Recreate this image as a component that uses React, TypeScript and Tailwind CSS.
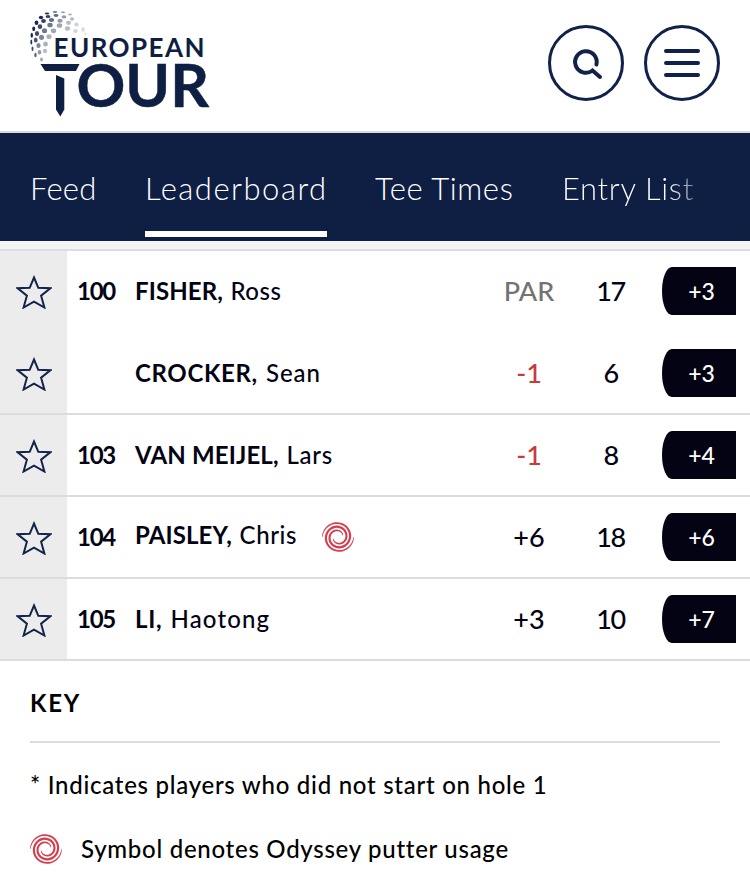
const tabs = [
  { label: "Feed", active: false, className: "mr-[49px] w-[66px] tracking-[0.2px]" },
  { label: "Leaderboard", active: true, className: "mr-[48px] w-[182px] tracking-[1.5px]" },
  { label: "Tee Times", active: false, className: "mr-[49px] w-[138px] tracking-[0.6px]" },
  { label: "Entry List", active: false, className: "w-[134px] tracking-[0.65px]" },
];

type Player = {
  pos: string;
  last: string;
  first: string;
  today: string;
  hole: string;
  total: string;
  lastTracking: string;
  firstTracking: string;
  odyssey?: boolean;
  tied?: boolean;
};

const players: Player[] = [
  { pos: "100", last: "FISHER,", first: "Ross", today: "PAR", hole: "17", total: "+3", lastTracking: "tracking-[0.1px]", firstTracking: "tracking-[0.5px]", tied: true },
  { pos: "", last: "CROCKER,", first: "Sean", today: "-1", hole: "6", total: "+3", lastTracking: "tracking-[0.65px]", firstTracking: "tracking-[1px]" },
  { pos: "103", last: "VAN MEIJEL,", first: "Lars", today: "-1", hole: "8", total: "+4", lastTracking: "tracking-[0.15px]", firstTracking: "tracking-[0.7px]" },
  { pos: "104", last: "PAISLEY,", first: "Chris", today: "+6", hole: "18", total: "+6", lastTracking: "tracking-[0.1px]", firstTracking: "tracking-[0.6px]", odyssey: true },
  { pos: "105", last: "LI,", first: "Haotong", today: "+3", hole: "10", total: "+7", lastTracking: "tracking-[0.7px]", firstTracking: "tracking-[1.15px]" },
];

// cx, cy, rx, ry, opacity
const dimples = [
  [47, 13.5, 2.3, 0.9, 0.9], [55, 12, 2.4, 0.8, 0.8], [63, 12.3, 2.2, 0.8, 0.5], [70, 14.5, 2, 1, 0.35],
  [41, 17.5, 2.2, 1.7, 0.95], [48, 16.5, 2.4, 1.5, 0.85], [56, 15.5, 2.5, 1.4, 0.65], [64, 16.8, 2.4, 1.6, 0.45], [72, 19, 2.2, 1.8, 0.3],
  [36.5, 22.8, 1.9, 2.2, 0.95], [43.5, 21, 2.4, 2, 0.85], [51.5, 20, 2.7, 2, 0.65], [60, 20.8, 2.7, 2, 0.45], [68.5, 22.8, 2.5, 2.1, 0.3], [76.5, 24.5, 2.2, 2, 0.2],
  [33.7, 28.8, 1.5, 2.4, 0.95], [40, 26.7, 2.3, 2.4, 0.8], [50, 25, 2.7, 2.3, 0.6], [59.5, 25.5, 2.7, 2.3, 0.4], [67.5, 28.5, 2.6, 2.3, 0.3], [75.5, 31, 2.4, 2.1, 0.18], [83, 29.5, 1.8, 2.2, 0.16],
  [31.8, 35.2, 1.2, 2.5, 0.95], [37, 33.5, 2.1, 2.6, 0.8], [44.5, 30.8, 2.6, 2.5, 0.6], [53.5, 30.8, 2.7, 2.4, 0.4], [85.5, 34, 1, 1.3, 0.14],
  [31.3, 42, 1, 2.5, 0.9], [35.7, 40, 1.9, 2.6, 0.75], [41.5, 37.3, 2.5, 2.6, 0.55], [49, 36.7, 2.6, 2.4, 0.35],
  [32.5, 48.8, 1, 2.4, 0.8], [38.5, 45.5, 2.1, 2.5, 0.55], [45.5, 44, 2.4, 2.5, 0.35],
  [35.5, 55, 1.2, 2.2, 0.7], [39.5, 52.3, 1.8, 2.3, 0.45], [45, 51, 2.1, 2.2, 0.3], [41.5, 59.5, 1.4, 1.9, 0.4],
];

function Logo() {
  return (
    <svg width="184" height="110" viewBox="28 9 184 110" fill="#0f1f43">
      {dimples.map(([cx, cy, rx, ry, opacity], i) => (
        <ellipse key={i} cx={cx} cy={cy} rx={rx} ry={ry} opacity={opacity} />
      ))}
      <text x="53.5" y="57" fontSize="26" fontWeight="700" fontFamily="Lato, sans-serif" textLength="151">
        EUROPEAN
      </text>
      <path d="M40.5 64h39l-3.5 7H45z" />
      <path d="M56 75l8.300 3.500v31l-4 7-4.300-7z" />
      <text x="76.5" y="107" fontSize="60" fontWeight="700" fontFamily="Lato, sans-serif" textLength="132.5" lengthAdjust="spacingAndGlyphs" stroke="#0f1f43" strokeWidth="0.5">
        OUR
      </text>
    </svg>
  );
}

function Star() {
  return (
    <svg width="36" height="34" viewBox="0 0 36 34" fill="none" stroke="#12244a" strokeWidth="2">
      <path d="M18 2.500l4.300 10.300 12 .5-9.200 7.400 3.300 11.800L18 26.700 7.600 32.500l3.300-11.800-9.200-7.400 12-.5z" />
    </svg>
  );
}

// One arm of the swirl: a spiral band that thins out at both ends
function spiralArm(start: number) {
  const steps = 60;
  const turns = 1.45;
  const outer: string[] = [];
  const inner: string[] = [];
  for (let i = 0; i <= steps; i++) {
    const t = i / steps;
    const angle = start + t * turns * 2 * Math.PI;
    const r = 15.7 - 7.3 * turns * t;
    const half = 0.2 + 0.95 * Math.sqrt(Math.max(0, Math.sin(Math.PI * t)));
    outer.push(`${((r + half) * Math.cos(angle)).toFixed(2)} ${((r + half) * Math.sin(angle)).toFixed(2)}`);
    inner.unshift(`${((r - half) * Math.cos(angle)).toFixed(2)} ${((r - half) * Math.sin(angle)).toFixed(2)}`);
  }
  return `M${[...outer, ...inner].join("L")}Z`;
}

const swirlPath = spiralArm(Math.PI) + spiralArm(0);

function Swirl() {
  return (
    <svg className="shrink-0" width="32" height="32" viewBox="-16 -16 32 32" fill="#d24050">
      <path d={swirlPath} />
    </svg>
  );
}

function todayColor(today: string) {
  if (today === "PAR") return "text-[#737373]";
  return today.startsWith("-") ? "text-[#c43c3c]" : "text-[#030314]";
}

function PlayerRow({ player }: { player: Player }) {
  return (
    <div className={`flex h-[82px] border-b-2 ${player.tied ? "border-transparent" : "border-[#dcdcde]"}`}>
      <div className={`flex w-[67px] shrink-0 items-center justify-center bg-[#ececec] pt-0.5 ${player.tied ? "-mb-0.5 pb-0.5" : ""}`}>
        <Star />
      </div>
      <div className="flex w-[58px] shrink-0 items-center justify-center text-[24px] font-bold tracking-[-1.2px]">{player.pos}</div>
      <div className="flex grow items-center pl-[10px] text-[24px] whitespace-pre">
        <span className={`flex ${player.odyssey ? "pb-1" : ""}`}>
          <span className={`font-bold ${player.lastTracking}`}>{player.last}</span>
          <span className={`ml-px font-medium ${player.firstTracking}`}> {player.first}</span>
        </span>
        {player.odyssey && (
          <span className="ml-[25px]">
            <Swirl />
          </span>
        )}
      </div>
      <div className={`flex w-[84px] shrink-0 items-center justify-center text-[27px] font-medium ${todayColor(player.today)}`}>{player.today}</div>
      <div className="flex w-[82px] shrink-0 items-center justify-center pr-[3px] text-[27px] font-medium tracking-[-1.5px]">{player.hole}</div>
      <div className="mr-[14px] ml-[9px] flex h-12 w-[74px] shrink-0 items-center justify-center self-center rounded-l-[10px_24px] bg-[#030314] pl-[5px] text-[23px] font-medium text-white">
        {player.total}
      </div>
    </div>
  );
}

export default function App() {
  return (
    <div className="h-[884px] w-[750px] overflow-hidden bg-white font-[Lato,sans-serif] text-[#030314]">
      <header className="flex h-[133px] justify-between border-b-2 border-[#d9dde3] pr-[30px] pl-[28px]">
        <div className="pt-[9px]">
          <Logo />
        </div>
        <div className="flex gap-5 pt-[25px]">
          <button className="flex size-[76px] items-center justify-center rounded-full border-3 border-[#12214a]">
            <svg width="70" height="70" viewBox="551 28 70 70" fill="none" stroke="#12214a" strokeWidth="4">
              <path strokeLinecap="round" d="M596.4 64.500A10.800 10.800 0 1 0 592.5 70.500L600 77" />
            </svg>
          </button>
          <button className="flex size-[76px] items-center justify-center rounded-full border-3 border-[#12214a]">
            <svg width="36" height="28" viewBox="0 0 36 28" stroke="#12214a" strokeWidth="4" strokeLinecap="round">
              <path d="M2 2h32M2 14h32M2 26h32" />
            </svg>
          </button>
        </div>
      </header>

      <nav className="flex h-[108px] bg-[#0f1f43] pl-[30px] text-[31px] font-light whitespace-nowrap text-white">
        {tabs.map((tab) => (
          <div
            key={tab.label}
            className={`mb-1 flex shrink-0 items-center border-b-6 pt-3 ${tab.active ? "border-white" : "border-transparent"} ${tab.className}`}
          >
            {tab.label === "Entry List" ? (
              <span className="bg-linear-to-r from-white from-80% to-[#7d89a5] bg-clip-text text-transparent">{tab.label}</span>
            ) : (
              tab.label
            )}
          </div>
        ))}
      </nav>
      <div className="h-[10px] border-b-2 border-[#dcdce2] bg-[#f4f4f5]" />

      <main>
        {players.map((player) => (
          <PlayerRow key={player.last} player={player} />
        ))}
      </main>

      <section className="px-[30px] text-[24px] text-black">
        <h2 className="flex h-[82px] items-center border-b-2 border-[#dcdcde] pt-1 font-bold tracking-[1.7px]">KEY</h2>
        <p className="mt-[26px] leading-8 font-medium tracking-[0.73px]">* Indicates players who did not start on hole 1</p>
        <p className="mt-8 flex items-center leading-8 font-medium tracking-[0.72px]">
          <Swirl />
          <span className="ml-[19px]">Symbol denotes Odyssey putter usage</span>
        </p>
      </section>
    </div>
  );
}
